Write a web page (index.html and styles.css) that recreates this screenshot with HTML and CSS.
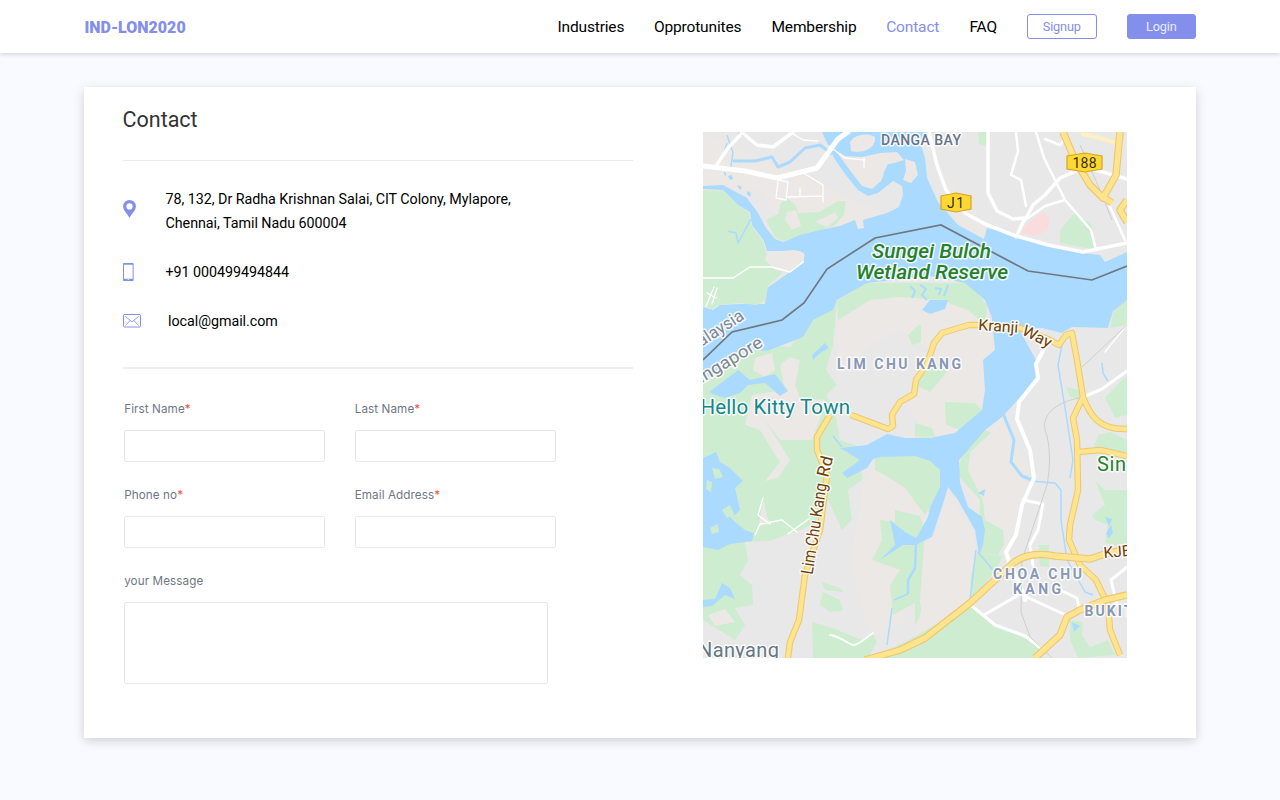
FILE: index.html
```html
<!DOCTYPE html>
<html lang="en">
<head>
<meta charset="utf-8">
<title>IND-LON2020 Contact</title>
<link rel="stylesheet" href="styles.css">
</head>
<body>
<header class="topbar">
  <div class="topbar-inner">
    <a class="brand">IND-LON2020</a>
    <nav class="nav">
      <a class="industries">Industries</a>
      <a class="opportunities">Opprotunites</a>
      <a class="membership">Membership</a>
      <a class="contact active">Contact</a>
      <a class="faq">FAQ</a>
      <a class="btn">Signup</a>
      <a class="btn btn-fill">Login</a>
    </nav>
  </div>
</header>
<main class="card">
  <section class="details">
    <h1 class="title">Contact</h1>
    <div class="info">
      <div class="row row-address">
        <svg class="icon" width="20" height="20" viewBox="0 0 20 20"><path fill="#848eeb" fill-rule="evenodd" d="M6.500 1A6.400 6.400 0 0 0 .1 7.400c0 4.200 4.600 7.400 6.400 11.600 1.800-4.200 6.400-7.400 6.400-11.600A6.400 6.400 0 0 0 6.500 1Zm0 3.300a3.100 3.100 0 1 1 0 6.200 3.100 3.100 0 0 1 0-6.200Z"/></svg>
        <p class="text">78, 132, Dr Radha Krishnan Salai, CIT Colony, Mylapore,<br>Chennai, Tamil Nadu 600004</p>
      </div>
      <div class="row row-phone">
        <svg class="icon" width="20" height="20" viewBox="0 0 20 20"><path fill="#848eeb" fill-rule="evenodd" d="M.8 1h9a.8.8 0 0 1 .8.8v16.400a.8.8 0 0 1-.8.8H.8a.8.8 0 0 1-.8-.8V1.800A.8.8 0 0 1 .8 1Zm.2 1.800v13.900h8.600V2.800Zm3.600 14.500v.8H6v-.8Z"/></svg>
        <p class="text">+91 000499494844</p>
      </div>
      <div class="row row-mail">
        <svg class="icon" width="20" height="20" viewBox="0 0 20 20" fill="none" stroke="#848eeb"><rect x=".5" y="3.500" width="17" height="12.500" rx=".8" stroke-width="1"/><path stroke-width=".9" d="M2.300 5.300l6.700 5.600 6.700-5.600M2.500 14.500l4.500-5M15.500 14.500l-4.500-5"/></svg>
        <p class="text">local@gmail.com</p>
      </div>
    </div>
    <form class="form">
      <label class="field"><span class="label">First Name<b class="req">*</b></span><input class="input" type="text"></label>
      <label class="field"><span class="label">Last Name<b class="req">*</b></span><input class="input" type="text"></label>
      <label class="field"><span class="label">Phone no<b class="req">*</b></span><input class="input" type="text"></label>
      <label class="field"><span class="label">Email Address<b class="req">*</b></span><input class="input" type="text"></label>
      <label class="field wide"><span class="label">your Message</span><textarea class="input message"></textarea></label>
    </form>
  </section>
  <svg class="map" width="424" height="526" viewBox="703 132 424 526">
    <rect x="703" y="132" width="424" height="526" fill="#e8e8e8"/>

    <!-- sandy areas -->
    <g fill="#ebe8e5">
      <path d="M703 132H925L958 226L985 240L987 228L925 150V132H703V190H760L790 245L900 220Z"/>
      <path d="M837 300L870 284L960 284L990 320L992 350L983 410L955 433L925 436L905 400L930 350L900 330L870 345L837 380Z"/>
      <path d="M875 460L915 457L940 465L945 485L930 520L915 545L905 620L870 640L850 560L862 490Z"/>
      <path d="M948 490L975 535L973 575L968 605L915 640L918 545L934 537Z"/>
      <path d="M1002 417L985 433L965 470L970 500L990 530L1005 550L1020 520L1028 470Z"/>
    </g>

    <!-- greens -->
    <g fill="#ceedd0">
      <path d="M780 205L786 197L796 206L798 213L820 212L838 201L846 201L844 215L834 226L800 236L783 241L775 237L766 220L778 214Z"/>
      <path d="M703 378L720 355L745 345L790 347L813 318L837 300L833 345L826 370L837 385L826 395L835 412L840 440L860 447L862 480L848 490L852 520L842 530L828 500L822 520L800 530L770 541L745 542L748 560L740 575L752 585L753 605L735 608L745 625L735 640L703 620Z"/>
      <path d="M875 445L925 436L935 440L935 462L945 475L940 490L925 515L905 488L890 478L875 470Z"/>
      <path d="M880 520L895 522L895 510L920 516L925 530L920 600L893 615L890 585L900 570L872 560L882 540Z"/>
      <path d="M837 301L855 290L867 283H962L972 284L987 306L985 325L968 310L940 300L900 297L870 300L838 320Z"/>
      <path d="M918 325L908 335L912 345L921 342V325ZM920 375L945 360L947 372L930 392L915 385ZM945 402L975 403L982 410L960 430L946 425ZM915 423L932 428L935 437L915 436Z"/>
      <path d="M964 440L985 430L991 433L970 452L968 470L983 500L985 520L1003 530L1004 545L998 555L978 553L980 500L958 475Z"/>
      <path d="M977 553L1003 556L995 572L972 598L970 580Z"/>
      <path d="M870 658L905 642L970 605L985 617L1010 632L1030 640L1045 652L1040 658Z"/>
      <path d="M822 582L840 588L843 592L825 590ZM823 592L840 600L843 611L830 612L820 605ZM812 622L830 627L862 640L872 632L877 642L868 658H813Z"/>
      <path d="M1095 480L1105 490H1127V547L1105 543L1108 525L1095 520L1092 515L1105 505ZM1093 450L1098 435L1110 432L1127 440V452L1103 450ZM1105 398L1127 375V415L1115 418ZM1066 387L1080 390V400L1070 397ZM1110 328L1114 310L1127 300V325Z"/>
      <path d="M1070 620L1083 622L1082 635L1090 647L1108 640L1115 655L1078 658L1070 640ZM1039 545H1049V567L1040 566ZM978 132H987V146L979 144ZM1060 230L1075 212L1092 225L1095 250L1060 243Z"/>
      <path d="M915 595C922 600 924 615 915 624Z"/>
    </g>
    <g fill="#ebe8e5">
      <path d="M787 212L785 220L792 230L801 226L796 210ZM815 222L835 212L838 218L827 227Z"/>
      <path d="M755 358L772 353L775 370L765 377L753 370ZM780 365L790 357L800 360L795 385L800 398L825 400L824 408L812 440L780 440L765 420L790 460L778 478L765 481L780 462L760 430L745 425L752 395L785 390Z"/>
      <path d="M759 525L763 500L768 520L773 523L760 526ZM708 615L725 609L735 622L715 626Z"/>
    </g>
    <path fill="#fadcdc" d="M1018 232L1042 212L1049 217L1048 230L1035 236Z"/>

    <!-- water bodies -->
    <g fill="#aadaff">
      <path d="M703 186L723 185L747 198L758 213L766 228L775 239L783 242L800 235L820 230L840 226L855 220L858 229L864 228L863 220L887 213L899 207L903 195L902 186L893 181L878 193L868 196L858 190L845 174L834 158L822 132H930L921 145L925 158L927 178L938 202L958 225L984 239L987 228L1015 235L1045 244L1082 253L1100 255L1105 262L1127 252V300L1113 311L1108 328L1072 327L1062 333L1042 328L1020 331L1036 360L1038 377L1015 403L1002 417L985 430L968 450L959 460L960 483L968 507L982 517L985 530L983 545L979 555L975 530L958 500L948 487L942 507L932 537L915 545V540L928 517L930 507L940 487V470L930 461L915 456L880 457L873 459L867 468L847 478L842 473L860 460L840 448L867 445L887 434L905 438L930 438L955 433L982 410L985 390L983 360L995 350L992 318L985 300L965 283L930 276L867 283L837 300L833 310L813 320L803 337L767 351L743 349L703 381V307L713 310L720 305L740 304L765 304L767 288L800 265L805 255L800 251L767 251L764 241L752 225L750 212L738 205L723 190L703 189Z"/>
      <path d="M709 392L725 380L738 370L750 380L775 374L782 383L788 391L780 396L765 383L748 385L740 393L725 398L715 395Z"/>
      <path d="M703 458L716 452L720 462L730 468L743 481L735 488L740 510L735 515L725 512L735 522L745 530L754 533L752 541L730 544L718 550L703 547Z"/>
      <path d="M812 355L825 343L829 348L820 353L813 360ZM703 600L715 599L722 583L730 588L735 599L725 595L712 606L703 607ZM922 310L930 300L948 300L945 309L930 314ZM890 520L905 532L920 540L917 545L903 545L880 560L895 545ZM1105 517L1112 519L1109 526ZM1106 534L1111 524L1113 533L1109 538ZM1072 622L1080 626L1074 632ZM978 493L985 489L984 496Z"/>
    </g>
    <g fill="#ceedd0">
      <path d="M703 190L723 191L738 205L749 213L751 225L764 243L766 252L780 262L783 272L768 286L766 300L756 305L740 303L719 305L712 309L703 306Z"/>
      <path d="M712 468l7 1 4 8-8 2zM722 510l8-5 4 9-7 4zM710 528l8-4 1 8-7 2zM707 480l5 2-1 10-5-3z"/>
    </g>
    <path fill="#ebe8e5" d="M767 252L795 250L804 253L804 263L785 272L775 270L765 260ZM850 142C855 133 870 133 875 137C876 149 863 154 851 151ZM905 159L915 162L918 175L911 183L903 180L906 170ZM835 150L845 156L862 157L880 153L897 152L904 160L888 165L881 181L872 189L862 186L852 173Z"/>
    <path fill="#aadaff" d="M883 174L888 164L904 162L904 170L890 180ZM728 176l4-1 1 4-3 1zM737 185l5 2-2 3zM747 191l4 2-1 4-3-3zM723 172l3 1v4z"/>
    <g fill="none" stroke="#aadaff" stroke-linejoin="round">
      <path stroke-width="3" d="M733 161L755 161L772 157L778 167L790 162L805 148L820 145L832 154"/>
      <path stroke-width="1.500" d="M727 143L722 160M738 133L753 140M728 231L736 233L738 243L751 219M727 135L733 153L730 172"/>
      <path stroke-width="3" d="M1002 411L1014 440L1011 462L1022 476L1032 480"/>
      <path stroke-width="2.500" d="M916 541L915 568L908 580V594"/>
      <path stroke-width="1.500" d="M1062 345L1058 365L1067 420L1073 460L1070 478M1030 481L1055 483L1061 490V520L1067 560L1085 592L1093 595M976 550L970 600M978 552L993 570M892 608L887 645M833 436L842 447M1102 363L1103 373L1108 381M908 594L894 600"/>
      <path stroke-width="2" d="M910 286l5 5-3 7M920 285l6 4-4 6 5 5M935 288l6 1-2 6M948 285l-4 11"/>
    </g>

    <!-- minor roads and rail -->
    <g fill="none" stroke="#fff" stroke-linejoin="round" stroke-linecap="round">
      <path stroke-width="1.300" d="M805 174L823 185V202M778 181L776 198L786 200L788 182L779 180M786 197L823 196M800 188V196M829 146L845 158L865 160M864 158V168M790 132L803 140L818 141M703 278H733L750 267H772L790 272L803 262M717 288L712 304M707 293L716 298M714 287L706 306M755 535L760 524L782 520L797 532M763 498L758 515L770 524M788 534L810 518M1105 352L1127 325"/>
      <path stroke-width="1.800" d="M830 635C843 637 848 645 854 645C862 643 866 637 873 633"/>
      <path stroke-width="5" d="M848 132L838 139L817 168L777 178L745 171L703 166"/>
      <path stroke-width="3.500" d="M716 166L728 148L743 132M745 135L757 145L773 147L793 132"/>
      <path stroke-width="3.500" d="M929 132L937 165L946 190L965 213L985 224L1013 235L1048 245L1083 252L1127 243M988 132V193L997 211L1013 219L1025 218L1016 237M1025 220L1033 205L1045 195L1060 178L1085 167L1127 179"/>
      <path stroke-width="2.500" d="M1016 132L1018 151L1011 175L1021 180L1026 206M1028 218L1045 206L1065 200M1036 132L1044 158L1065 200L1091 230L1096 250M1045 139L1060 145L1066 138M1107 200L1125 240"/>
      <path stroke-width="4" d="M1045 347L1036 364L1038 378L1019 402L1017 419L1030 450L1034 478L1022 505L1016 535L1006 552L1010 565L1022 590L1025 600"/>
      <path stroke-width="3" d="M1023 500L1043 504L1038 530L1030 545L1033 565M972 606L995 625L1025 636L1042 649M984 615L1020 594L1068 616M1060 590L1077 598L1080 612M1127 567L1111 580L1117 605M1083 397L1102 389L1127 371"/>
      <path stroke="#fff0c0" stroke-width="4" d="M1083 134L1100 138L1120 144"/>
    </g>
    <g fill="none" stroke="#cfcfcf" stroke-width="1">
      <path d="M1082 367L1127 325M1083 397C1058 402 1042 412 1045 430C1053 450 1048 480 1047 485L1022 560L1021 612L1030 637L1052 658M1080 145L1100 190L1112 220"/>
    </g>

    <!-- main roads: casing, then fill -->
    <g fill="none" stroke-linejoin="round">
      <path stroke="#eec66e" stroke-width="6.500" d="M851 415L875 424L888 429L893 426L892 415L900 402L914 394L916 380L927 364L934 343L942 333L969 325L980 325L1020 328L1050 340L1059 345L1066 335L1072 333L1077 360L1083 397C1090 415 1098 430 1127 429M830 415L817 437L817 450L827 475L820 530L805 575L799 620L790 642L788 658M1083 397L1073 418L1077 440L1078 490L1070 525L1069 540L1080 565L1096 580L1108 605L1110 630L1120 655M1079 452L1100 450L1127 456"/>
      <path stroke="#ffe48f" stroke-width="4.500" d="M851 415L875 424L888 429L893 426L892 415L900 402L914 394L916 380L927 364L934 343L942 333L969 325L980 325L1020 328L1050 340L1059 345L1066 335L1072 333L1077 360L1083 397C1090 415 1098 430 1127 429M830 415L817 437L817 450L827 475L820 530L805 575L799 620L790 642L788 658M1083 397L1073 418L1077 440L1078 490L1070 525L1069 540L1080 565L1096 580L1108 605L1110 630L1120 655M1079 452L1100 450L1127 456"/>
      <path stroke="#eec66e" stroke-width="7.500" d="M865 660L900 650L925 638L970 603L1010 566C1020 556 1035 552 1055 556L1090 559L1105 554L1127 549M1035 658L1060 635L1067 617L1080 610L1105 600L1127 595M1063 132L1075 160L1090 185L1103 198L1116 175L1120 132M1100 195L1112 203M1127 200L1120 210L1127 222"/>
      <path stroke="#ffe48f" stroke-width="5.300" d="M865 660L900 650L925 638L970 603L1010 566C1020 556 1035 552 1055 556L1090 559L1105 554L1127 549M1035 658L1060 635L1067 617L1080 610L1105 600L1127 595M1063 132L1075 160L1090 185L1103 198L1116 175L1120 132M1100 195L1112 203M1127 200L1120 210L1127 222"/>
    </g>

    <path fill="none" stroke="#707780" stroke-width="1.700" d="M703 360L732 332L782 320L804 303L827 269L875 238L941 225L1028 271L1092 280L1127 266"/>

    <!-- route shields -->
    <g fill="#fdd835" stroke="#d9a520" stroke-width="1.200">
      <path d="M941 196L956 193L971 196V209L956 212L941 209ZM1067 156L1085 153L1102 156V169L1085 172L1067 169Z"/>
    </g>
    <g class="shield"><text x="947" y="208" textLength="17">J1</text><text x="1072.500" y="168" textLength="24">188</text></g>

    <g class="place">
      <text class="district" x="881" y="145" textLength="80">DANGA BAY</text>
      <text class="area" x="837" y="369" textLength="124">LIM CHU KANG</text>
      <text class="area" x="993" y="579" textLength="89">CHOA CHU</text>
      <text class="area" x="1013" y="594" textLength="48">KANG</text>
      <text class="area" x="1084.500" y="616" textLength="48">BUKIT</text>
      <text class="park" x="872" y="258" textLength="119" lengthAdjust="spacingAndGlyphs">Sungei Buloh</text>
      <text class="park" x="856" y="278.500" textLength="152" lengthAdjust="spacingAndGlyphs">Wetland Reserve</text>
      <text class="green" x="1097" y="471" textLength="29">Sin</text>
      <text class="town" x="700.500" y="414" textLength="149.500">Hello Kitty Town</text>
      <text class="grey" x="698" y="657" textLength="81">Nanyang</text>
      <text class="border" transform="translate(689 355) rotate(-33)" textLength="67" lengthAdjust="spacingAndGlyphs">Malaysia</text>
      <text class="border" transform="translate(692 389) rotate(-31)" textLength="84" lengthAdjust="spacingAndGlyphs">Singapore</text>
      <text class="road" transform="translate(812.500 575) rotate(-81)" textLength="92" lengthAdjust="spacingAndGlyphs">Lim Chu Kang</text>
      <text class="road" transform="translate(828 478) rotate(-76)" textLength="21" lengthAdjust="spacingAndGlyphs">Rd</text>
      <text class="road small" transform="translate(978 330) rotate(4)" textLength="40" lengthAdjust="spacingAndGlyphs">Kranji</text>
      <text class="road small" transform="translate(1021 334) rotate(27)" textLength="31" lengthAdjust="spacingAndGlyphs">Way</text>
      <text class="road small" transform="translate(1104 558) rotate(-5)">KJE</text>
    </g>
  </svg>
</main>
</body>
</html>
```
FILE: styles.css
```css
* { box-sizing: border-box; }
body { margin: 0; min-height: 800px; background: #f9faff; font-family: Roboto, "Liberation Sans", sans-serif; color: #000; overflow: hidden; }
.topbar { height: 53px; background: #fff; box-shadow: 0 1px 5px rgba(0, 0, 0, .18); }
.topbar-inner { width: 1112px; height: 53px; margin: 0 auto; padding-left: .5px; display: flex; align-items: center; justify-content: space-between; }
.brand { padding-top: 2px; color: #848eeb; font-weight: 900; font-size: 16px; }
.nav { display: flex; align-items: center; font-size: 15.500px; letter-spacing: -.16px; line-height: 20px; gap: 30px; }
.nav a { white-space: nowrap; }
.industries { width: 66.500px; }
.opportunities { width: 87.500px; }
.membership { width: 84px; }
.contact { width: 54px; }
.faq { width: 27.500px; }
.nav .contact { padding-left: .7px; }
.active { color: #848eeb; }
.nav .btn { width: 69.500px; height: 25px; border: 1px solid #848eeb; border-radius: 3px; color: #848eeb; font-size: 12.700px; line-height: 24px; text-align: center; }
.nav .btn-fill { background: #848eeb; color: #e9ebff; }
.card { width: 1112px; height: 651px; margin: 34px auto 0; padding: 0 69px 0 38.500px; background: #fff; box-shadow: 0 3px 10px rgba(0, 0, 0, .17); display: flex; justify-content: space-between; align-items: flex-start; }
.details { width: 510.500px; }
.title { margin: 0; height: 74px; padding-top: 18.500px; border-bottom: 1px solid #eaeaea; font-weight: 400; font-size: 21.500px; line-height: 28px; color: #333; }
.info { height: 207.500px; padding-top: 26px; border-bottom: 2px solid #eee; }
.row { display: flex; align-items: center; gap: 23px; font-size: 14.300px; letter-spacing: -.04px; line-height: 24px; }
.row-address { height: 48px; }
.row-address .icon { margin-bottom: 5px; }
.row-phone, .row-mail { height: 24px; margin-top: 25px; }
.row-mail .text { margin-left: 2.500px; }
.icon { flex: none; }
.text { margin: 0; white-space: nowrap; }
.form { padding: 32px 0 0 1.700px; display: grid; grid-template-columns: 201px 201px; column-gap: 29.500px; row-gap: 25px; }
.field { display: flex; flex-direction: column; gap: 13px; height: 61px; }
.label { font-family: Inter, "Liberation Sans", sans-serif; font-size: 11.700px; line-height: 16px; letter-spacing: .08px; color: #6f7782; }
.req { color: #f0503c; font-weight: 400; }
.input { display: block; width: 201px; height: 32px; padding: 4px; border: 1px solid #e8e8e8; border-radius: 2px; background: #fff; outline: none; }
.wide { grid-column: 1 / 3; height: 111px; }
.message { width: 424px; height: 82px; resize: none; }
.map { display: block; margin-top: 45px; overflow: hidden; font-family: Roboto, "Liberation Sans", sans-serif; }
.place text { paint-order: stroke; stroke: #fff; stroke-opacity: .85; stroke-width: 3px; stroke-linejoin: round; }
.shield { font-size: 14px; fill: #3c3000; }
.district { font-size: 14px; font-weight: 500; fill: #667488; }
.area { font-size: 14px; font-weight: 700; fill: #8997b5; }
.park { font-size: 20.500px; font-style: italic; font-weight: 500; fill: #25822b; }
.green { font-size: 20px; fill: #25822b; }
.town { font-size: 20.500px; fill: #14868b; }
.grey { font-size: 20px; fill: #667783; }
.border { font-size: 17px; fill: #808792; }
.road { font-size: 17px; fill: #70400c; }
.small { font-size: 15.500px; }
```
